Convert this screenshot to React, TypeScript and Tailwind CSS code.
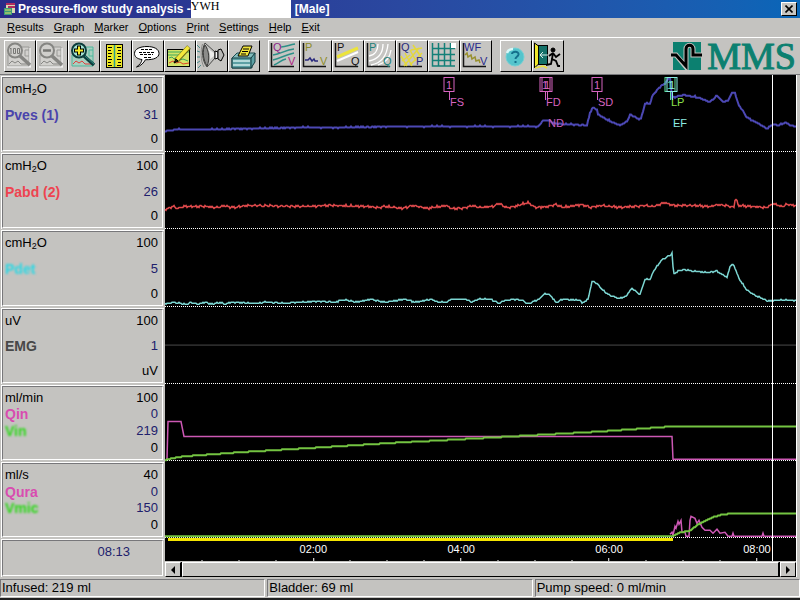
import type { ReactNode } from "react";

type Point = [number, number];

const TRACE_WIDTH = 631;
const ROW_HEIGHT = 77;

// Builds a stepped path with one sample per unit and a little signal noise
const tracePath = (points: Point[], noise = 0) => {
  let path = "";
  let seg = 0;
  for (let x = points[0][0]; x <= points[points.length - 1][0]; x++) {
    while (seg < points.length - 2 && x > points[seg + 1][0]) seg++;
    const [x0, y0] = points[seg];
    const [x1, y1] = points[seg + 1];
    const base = y0 + ((y1 - y0) * (x - x0)) / (x1 - x0);
    const jitter = noise * Math.sin(x * 1.9) * Math.sin(x * 0.73 + 1);
    path += `${path ? "L" : "M"}${x} ${Math.round(base + jitter)}`;
  }
  return path;
};

const toLine = (points: Point[]) => "M" + points.map((p) => p.join(" ")).join("L");

const pves = tracePath(
  [
    [0, 57], [10, 55], [35, 55], [95, 54], [135, 53], [175, 53], [235, 52], [373, 52], [375, 50], [378, 46], [384, 46],
    [390, 49], [422, 51], [425, 38], [428, 33], [432, 35], [433, 40], [444, 46], [455, 51], [462, 47], [465, 40], [473, 44],
    [476, 44], [480, 29], [485, 29], [488, 20], [494, 13], [500, 8], [505, 2], [507, 23], [512, 22], [518, 20], [530, 22],
    [545, 27], [552, 21], [558, 27], [563, 26], [567, 18], [570, 18], [573, 29], [582, 43], [593, 49], [602, 54], [608, 50],
    [613, 51], [620, 48], [626, 51], [631, 52],
  ],
  0.6
);

const pabd = tracePath(
  [
    [0, 58], [3, 57], [8, 55], [13, 57], [19, 55], [40, 55], [52, 56], [60, 54], [66, 56], [84, 54], [140, 55], [166, 54],
    [200, 55], [212, 56], [220, 55], [238, 57], [248, 54], [262, 57], [281, 54], [287, 57], [298, 57], [307, 54], [315, 56],
    [328, 55], [334, 52], [341, 56], [350, 55], [363, 51], [370, 56], [384, 55], [391, 53], [399, 56], [417, 53], [426, 56],
    [436, 54], [455, 56], [480, 54], [488, 55], [500, 51], [509, 54], [528, 54], [546, 55], [553, 53], [566, 55], [569, 56],
    [570, 48], [572, 49], [573, 54], [602, 56], [608, 52], [616, 55], [622, 53], [631, 54],
  ],
  1.2
);

const pdet = tracePath(
  [
    [0, 75], [5, 75], [8, 74], [15, 75], [22, 76], [26, 74], [32, 76], [40, 74], [48, 76], [55, 74], [60, 76], [66, 74], [90, 75],
    [100, 74], [122, 75], [135, 74], [150, 73], [170, 74], [176, 72], [182, 72], [190, 74], [206, 71], [220, 74], [240, 71],
    [250, 74], [265, 71], [275, 74], [282, 74], [286, 71], [301, 71], [307, 74], [313, 71], [326, 71], [334, 75], [340, 72],
    [352, 71], [357, 72], [363, 76], [368, 73], [374, 71], [380, 65], [384, 66], [391, 74], [398, 71], [415, 72], [417, 75],
    [423, 71], [427, 53], [431, 54], [435, 59], [444, 67], [454, 70], [461, 68], [467, 60], [475, 66], [480, 51], [485, 51],
    [489, 42], [497, 31], [506, 26], [507, 24], [508, 38], [509, 45], [514, 42], [519, 41], [530, 43], [545, 44], [551, 42],
    [562, 49], [565, 38], [567, 36], [569, 37], [574, 50], [582, 62], [590, 67], [603, 73], [612, 72], [631, 72],
  ],
  0.6
);

const qin = toLine([[2, 76], [3, 38], [16, 38], [19, 53], [507, 53], [508, 76], [631, 76]]);
const vin = tracePath([[0, 77], [7, 75], [20, 73], [35, 72], [75, 69], [142, 65], [255, 58], [435, 48], [507, 43], [631, 43]]);
const qura = toLine([
  [505, 74], [507, 72], [508, 75], [510, 66], [511, 68], [513, 61], [514, 64], [516, 60], [517, 72], [520, 72], [521, 76], [524, 76],
  [525, 60], [526, 56], [530, 58], [532, 63], [534, 60], [537, 67], [540, 70], [545, 70], [548, 73], [552, 69], [555, 73],
  [560, 72], [563, 76], [567, 76], [568, 73], [569, 76], [597, 76], [598, 73], [599, 76], [631, 76],
]);
const vmic = tracePath([[0, 76], [508, 76], [515, 72], [524, 71], [535, 63], [547, 57], [557, 54], [568, 53], [631, 53]]);

interface Line {
  label?: string;
  labelClass?: string;
  value?: string;
  live?: boolean;
}

interface Channel {
  id: string;
  unit: ReactNode;
  max: string;
  lines: Line[];
  traces: { d: string; color: string; width: number }[];
}

const cmH2O = (
  <>
    cmH<span className="relative top-[2px] text-[9px]">2</span>O
  </>
);

const channels: Channel[] = [
  {
    id: "pves",
    unit: cmH2O,
    max: "100",
    lines: [{ label: "Pves (1)", labelClass: "text-[#4a44ac]", value: "31", live: true }, { value: "0" }],
    traces: [{ d: pves, color: "#4c48b4", width: 2 }],
  },
  {
    id: "pabd",
    unit: cmH2O,
    max: "100",
    lines: [{ label: "Pabd (2)", labelClass: "text-[#ee4450]", value: "26", live: true }, { value: "0" }],
    traces: [{ d: pabd, color: "#e04a4c", width: 1.5 }],
  },
  {
    id: "pdet",
    unit: cmH2O,
    max: "100",
    lines: [{ label: "Pdet", labelClass: "text-[#2cd8e4] blur-[1px]", value: "5", live: true }, { value: "0" }],
    traces: [{ d: pdet, color: "#7cd6d2", width: 1.5 }],
  },
  {
    id: "emg",
    unit: "uV",
    max: "100",
    lines: [{ label: "EMG", labelClass: "text-[#484848]", value: "1", live: true }, { value: "uV" }],
    traces: [{ d: "M0 38.5H631", color: "#4a4a4a", width: 1 }],
  },
  {
    id: "infusion",
    unit: "ml/min",
    max: "100",
    lines: [
      { label: "Qin", labelClass: "text-[#d84cb0]", value: "0", live: true },
      { label: "Vin", labelClass: "text-[#28d814] blur-[1px]", value: "219", live: true },
      { value: "0" },
    ],
    traces: [
      { d: qin, color: "#cc58b4", width: 1.5 },
      { d: vin, color: "#74c442", width: 2 },
    ],
  },
  {
    id: "flow",
    unit: "ml/s",
    max: "40",
    lines: [
      { label: "Qura", labelClass: "text-[#d84cb0]", value: "0", live: true },
      { label: "Vmic", labelClass: "text-[#28d814] blur-[1px]", value: "150", live: true },
      { value: "0" },
    ],
    traces: [
      { d: qura, color: "#cc58b4", width: 1.5 },
      { d: vmic, color: "#74c442", width: 2 },
    ],
  },
];

const menuItems = ["Results", "Graph", "Marker", "Options", "Print", "Settings", "Help", "Exit"];

const markers = [
  { x: 284, label: "FS", low: false, color: "text-[#d664c0]", labelColor: "text-[#d664c0]" },
  { x: 380, label: "FD", low: false, color: "text-[#d664c0]", labelColor: "text-[#d664c0]" },
  { x: 382, label: "ND", low: true, color: "text-[#d664c0]", labelColor: "text-[#c45cb8]" },
  { x: 432, label: "SD", low: false, color: "text-[#d664c0]", labelColor: "text-[#d664c0]" },
  { x: 505, label: "LP", low: false, color: "text-[#5ce0a0]", labelColor: "text-[#8ce04c]" },
  { x: 507, label: "EF", low: true, color: "text-[#8cece4]", labelColor: "text-[#8cece4]" },
];

const percent = (x: number) => `${(x / TRACE_WIDTH) * 100}%`;

const ticks = Array.from({ length: 16 }, (_, i) => ({ x: 37.4 + i * 36.97, major: i % 4 === 3, minutes: (i + 1) / 2 }));

const raised = "bg-[#c6c5c2] border border-t-white border-l-white border-r-black border-b-black";
const sunken = "border border-t-[#77777a] border-l-[#77777a] border-r-white border-b-white";

/* ---------- Toolbar icons ---------- */

const Icon = ({ children }: { children: ReactNode }) => (
  <svg viewBox="0 0 30 30" className="size-[30px]" fill="none" stroke="black" aria-hidden="true">
    {children}
  </svg>
);

const Letter = ({ x, y, color, children }: { x: number; y: number; color: string; children: string }) => (
  <text x={x} y={y} fill={color} stroke="none" fontSize="11" fontFamily="Liberation Sans, Arial, sans-serif">
    {children}
  </text>
);

const Magnifier = ({ sign, active }: { sign: "100" | "-" | "+"; active?: boolean }) => {
  const ink = active ? "#0c3c3c" : "#858582";
  return (
    <Icon>
      <path d="M3 14V25H24V6H17M20 9H24M20 9V15H24" stroke={active ? "#4cb89c" : "#9a9a97"} fill={active ? "#a8cfc0" : "#d2d1ce"} />
      <path d="M4 23L7 20L10 22L13 20L16 23H24" stroke={active ? "#e03c3c" : "#858582"} />
      {!active && <path d="M2 26H26M25 7V26" stroke="white" strokeWidth="1" />}
      <circle cx="10" cy="9.5" r="7" fill={active ? "#a4e4d4" : "#d0cfcc"} stroke={ink} strokeWidth="2" />
      <path d="M15 15L25 24" stroke={ink} strokeWidth="3.5" />
      {active && <path d="M16 15L25 23" stroke="#2c8c84" strokeWidth="1" />}
      {sign === "100" && <path d="M6 7V13M5 8L6 7M8.5 7.5H10.5V12.5H8.5ZM12.5 7.5H14.5V12.5H12.5Z" stroke="#777774" />}
      {sign === "-" && <path d="M6 9.5H14" stroke="#777774" strokeWidth="2.5" />}
      {sign === "+" && (
        <>
          <path d="M10 4.5V14.5M5 9.5H15" stroke="black" strokeWidth="4" />
          <path d="M10 5.5V13.5M6 9.5H14" stroke="#f4ec2c" strokeWidth="2" />
        </>
      )}
    </Icon>
  );
};

const RulerIcon = () => (
  <Icon>
    <rect x="5.5" y="3.5" width="16" height="23" fill="#eee824" />
    <path d="M13.5 4V26" stroke="#28a090" strokeWidth="1.5" />
    <path d="M7 6.500H11M7 9.500H10M7 12.500H11M7 15.500H10M7 18.500H11M7 21.500H10M7 24.500H11M16 6.500H20M17 9.500H20M16 12.500H20M17 15.500H20M16 18.500H20M17 21.500H20M16 24.500H20" />
  </Icon>
);

const SpeechIcon = () => (
  <Icon>
    <path d="M9 18.5C4 18 1.500 15.500 1.500 12.500C1.500 8 7 5.500 14 5.500C21 5.500 26 8 26 12.500C26 16.500 21 19 12.500 18.700C10.500 22 8 25 3.500 26C7 23.500 8.500 21.500 9 18.500Z" fill="white" />
    <path d="M8 8.500H20M6 11.500H22M7 13.500H20M11 16.500H18" strokeDasharray="3 1" />
  </Icon>
);

const EditIcon = () => (
  <Icon>
    <rect x="2.5" y="8.5" width="22" height="17" fill="#d4e468" />
    <path d="M3 11H24M3 14H14" stroke="#3ca85c" />
    <path d="M4 17L7 16L9 18L12 16M15 19L18 18L23 20" stroke="#3ca85c" />
    <path d="M4 22L8 20L11 22L15 21L18 23L24 22" stroke="#e0402c" />
    <path d="M11 20L24 6" stroke="#6c6414" strokeWidth="5" />
    <path d="M12 18.500L23.500 6" stroke="#f4e83c" strokeWidth="3.5" />
    <path d="M9 22L13 20L11 18Z" fill="#302c10" />
  </Icon>
);

const HornIcon = () => (
  <Icon>
    <path d="M0 4L3 7M0 10L3 11M0 16H3M0 22L3 20M1 27L4 24" stroke="#4c8c8c" />
    <path d="M5.500 3C3.500 9 3.500 20 7 26" stroke="#8c8c8a" />
    <path d="M8 2L18 11V17L10 26C5 20 4 9 8 2Z" fill="#c4c4c2" stroke="#484846" />
    <path d="M8 4C12 9 13 19 10 25C6 19 5 9 8 4Z" fill="#8c8c8a" stroke="#383836" />
    <path d="M11 8L17 12V15L13 18C13.500 14 13 11 11 8Z" fill="#ececea" stroke="none" />
    <path d="M18 10L21 11V17L18 18Z" fill="#f4f4f4" />
    <path d="M21 9L24 8L27 14L24 20L21 18Z" fill="#b8b8b6" />
  </Icon>
);

const PrinterIcon = () => (
  <Icon>
    <path d="M3 17L8 12H26L23 18V27H3Z" fill="#84bcbc" stroke="#1c4c50" />
    <path d="M3 17H22L26 12V21L22 27H3Z" fill="#5ca0a4" stroke="#143c40" />
    <path d="M4 20H21M4 24H21" stroke="#d0ecea" strokeWidth="1.5" />
    <path d="M22 17V27" stroke="#143c40" />
    <path d="M9 15L14 5H23L19 15Z" fill="#f0e43c" />
    <path d="M14 8H20M13 10.500H19M12 13H17" />
  </Icon>
);

const Axes = () => <path d="M2.500 2V25.500H25" stroke="#141414" strokeWidth="1.5" />;

const QVIcon = () => (
  <Icon>
    <Axes />
    <path d="M12 6C17 6 20 4 26 3M4 14C12 13 16 9 25 8M4 19C12 17 16 14 25 12M5 24C10 22 12 19 17 18" stroke="#2c9088" strokeWidth="1.5" />
    <Letter x={4} y={10} color="#8c2488">Q</Letter>
    <Letter x={19} y={24} color="#b01c80">V</Letter>
  </Icon>
);

const PVIcon = () => (
  <Icon>
    <Axes />
    <path d="M4 19H7L9 17L11 20L13 18L14 20H17" stroke="#28287c" strokeWidth="1.5" />
    <Letter x={4} y={10} color="#8c8c28">P</Letter>
    <Letter x={19} y={24} color="#8c8c28">V</Letter>
  </Icon>
);

const PQIcon = () => (
  <Icon>
    <Axes />
    <path d="M4 16L25 7" stroke="#ece43c" strokeWidth="3" />
    <path d="M4 20L25 11" stroke="white" strokeWidth="2" />
    <Letter x={4} y={10} color="#141414">P</Letter>
    <Letter x={18} y={24} color="#141414">Q</Letter>
  </Icon>
);

const NomogramIcon = () => (
  <Icon>
    <Axes />
    <path d="M4 15C10 14 13 9 13 3M4 20C14 18 18 11 18 3M6 24C17 22 22 14 23 3M13 24C20 22 25 17 26 9" stroke="white" strokeWidth="1.3" />
    <Letter x={4} y={10} color="#1c8078">P</Letter>
    <Letter x={18} y={24} color="#1c8078">Q</Letter>
  </Icon>
);

const QPIcon = () => (
  <Icon>
    <Axes />
    <path d="M4 15L10 25M8 12L15 25M13 9L19 20M16 4L24 16M5 20L13 14M7 25L22 7M13 24L25 12M14 9L25 7" stroke="#e4d83c" strokeWidth="1.5" />
    <Letter x={4} y={10} color="#28287c">Q</Letter>
    <Letter x={19} y={24} color="#28287c">P</Letter>
  </Icon>
);

const GridIcon = () => (
  <Icon>
    <path d="M3.500 2V25H26M9.500 2V25M15.500 2V25M21.500 2V25M3 7.500H26M3 13.500H26M3 19.500H26" stroke="#148078" strokeWidth="1.5" />
    <rect x="22" y="2" width="5" height="5" fill="white" stroke="none" />
  </Icon>
);

const WFIcon = () => (
  <Icon>
    <Axes />
    <path d="M4 14L6 12L7 16L10 14L11 18L14 16L15 20L18 19L19 22" stroke="#98902c" strokeWidth="1.5" />
    <Letter x={3} y={10} color="#28288c">WF</Letter>
    <Letter x={19} y={24} color="#28288c">V</Letter>
  </Icon>
);

const HelpIcon = () => (
  <Icon>
    <circle cx="14" cy="16" r="9" fill="#54c4cc" stroke="#74d0d4" />
    <path d="M6 12C7 9 10 8 12 8" stroke="#d8f8f8" strokeWidth="2.5" />
    <path d="M11 13C11 10 18 10 17.500 13.500C17 16 14.500 15.500 14.500 18M14.500 20V22" stroke="#14708c" strokeWidth="2" />
  </Icon>
);

const ExitIcon = () => (
  <Icon>
    <path d="M1.500 2V27L5.500 23V5Z" fill="#f0e82c" />
    <rect x="5.500" y="4.500" width="9" height="19" fill="#147068" />
    <path d="M2 27L10 25L14 27" stroke="#ece03c" strokeWidth="1.5" />
    <path d="M7 14H15M7 14L10 11M7 14L10 17" stroke="#d8ece8" />
    <circle cx="20" cy="9" r="2" fill="black" />
    <path d="M20 12L19 18L23 20L25 25H27M19 18L18 23L13 24M20 12L16 15M20 12L23 16L27 13" strokeWidth="1.8" />
  </Icon>
);

const toolGroups = [
  [
    { name: "Zoom 100%", icon: <Magnifier sign="100" /> },
    { name: "Zoom out", icon: <Magnifier sign="-" /> },
    { name: "Zoom in", icon: <Magnifier sign="+" active /> },
    { name: "Scale", icon: <RulerIcon /> },
    { name: "Comment", icon: <SpeechIcon /> },
    { name: "Edit graph", icon: <EditIcon /> },
    { name: "Sound", icon: <HornIcon /> },
    { name: "Print", icon: <PrinterIcon /> },
  ],
  [
    { name: "Flow volume plot", icon: <QVIcon /> },
    { name: "Pressure volume plot", icon: <PVIcon /> },
    { name: "Pressure flow plot", icon: <PQIcon /> },
    { name: "Nomogram", icon: <NomogramIcon /> },
    { name: "Flow pressure plot", icon: <QPIcon /> },
    { name: "Grid", icon: <GridIcon /> },
    { name: "WF plot", icon: <WFIcon /> },
  ],
  [
    { name: "Help", icon: <HelpIcon /> },
    { name: "Exit", icon: <ExitIcon /> },
  ],
];

/* ---------- Page parts ---------- */

const TitleBar = () => (
  <header className="flex h-[18px] items-center bg-gradient-to-r from-[#2a2a88] via-[#2a48a0] to-[#0866b8] pl-[3px] pr-[3px] text-xs font-bold text-white">
    <svg viewBox="0 0 14 14" className="mr-px size-[14px]" aria-hidden="true">
      <path d="M3 1H12V11H3Z" fill="#d8d8b0" />
      <path d="M3 2H12M5 5H12" stroke="#b02c60" strokeWidth="2" />
      <path d="M1 6H9V13H1Z" fill="#3c9c78" />
      <path d="M2 8H8M2 11H8" stroke="#e8e060" />
    </svg>
    <h1 className="whitespace-nowrap">Pressure-flow study analysis -</h1>
    <span className="h-full w-[100px] bg-white font-['Liberation_Serif',serif] text-xs leading-3 font-normal text-black">YWH</span>
    <span className="ml-1">[Male]</span>
    <button aria-label="Close" className={`ml-auto flex h-[14px] w-4 items-center justify-center ${raised}`}>
      <svg viewBox="0 0 8 8" className="size-2" stroke="black" strokeWidth="1.6" aria-hidden="true">
        <path d="M0.500 0.500L7.500 7.500M7.500 0.500L0.500 7.500" />
      </svg>
    </button>
  </header>
);

const MenuBar = () => (
  <nav className="flex h-5 items-center border-b border-white px-[2px] text-[11px]">
    {menuItems.map((item) => (
      <button key={item} className="px-[5px]">
        <span className="underline">{item[0]}</span>
        {item.slice(1)}
      </button>
    ))}
  </nav>
);

const Logo = () => (
  <div className="ml-auto flex items-center gap-1 pr-1">
    <svg viewBox="0 0 32 30" className="h-[30px] w-8" aria-hidden="true">
      <rect x="2" y="1" width="28" height="28" fill="#0c8070" />
      <path d="M0 14H5L15 26V8C15 3 22 3 22 8V14H31" fill="none" stroke="#c6c5c2" strokeWidth="5" />
      <path d="M0 14H5L15 25V8C15 3 22 3 22 8V14H31" fill="none" stroke="black" strokeWidth="3" />
    </svg>
    <span className="font-['Liberation_Serif',serif] text-[38px] leading-8 text-[#0c8070] [-webkit-text-stroke:1px_#0c8070]">MMS</span>
  </div>
);

const Toolbar = () => (
  <div className="flex h-9 items-center gap-2 pl-1">
    {toolGroups.map((group, i) => (
      <div key={i} className="flex">
        {group.map((tool) => (
          <button key={tool.name} aria-label={tool.name} className={`size-8 ${raised}`}>
            {tool.icon}
          </button>
        ))}
      </div>
    ))}
    <Logo />
  </div>
);

const Panel = ({ children }: { children: ReactNode }) => (
  <div className="h-full border-t border-l border-white pr-px pb-px">
    <div className={`flex h-full flex-col justify-between pt-[3px] pr-1 pb-[3px] pl-[2px] ${sunken}`}>{children}</div>
  </div>
);

const ChannelPanel = ({ channel }: { channel: Channel }) => (
  <div className="flex-1 pt-px pl-px">
    <Panel>
      <div className="flex justify-between leading-4">
        <span>{channel.unit}</span>
        <span>{channel.max}</span>
      </div>
      {channel.lines.map((line, i) => (
        <div key={i} className="flex justify-between leading-4">
          <span className={`text-sm leading-4 font-bold ${line.labelClass ?? ""}`}>{line.label}</span>
          <span className={line.live ? "text-[#20206c]" : ""}>{line.value}</span>
        </div>
      ))}
    </Panel>
  </div>
);

const ChannelTrace = ({ channel }: { channel: Channel }) => (
  <div className="relative flex-1 border-b border-dotted border-white">
    <svg
      viewBox={`0 0 ${TRACE_WIDTH} ${ROW_HEIGHT}`}
      preserveAspectRatio="none"
      className="absolute inset-0 size-full overflow-visible"
      fill="none"
      aria-hidden="true"
    >
      {channel.traces.map((trace) => (
        <path key={trace.color} d={trace.d} stroke={trace.color} strokeWidth={trace.width} vectorEffect="non-scaling-stroke" />
      ))}
    </svg>
  </div>
);

const Markers = () => (
  <>
    {markers.map((marker) => (
      <div key={marker.label} className={`absolute top-[2px] text-[11px] ${marker.color}`} style={{ left: percent(marker.x) }}>
        <div className="h-[15px] w-[11px] -translate-x-1/2 border border-current text-center leading-[14px]">1</div>
        <div className="h-2 w-px bg-current" />
        <div className={`absolute left-px leading-3 ${marker.low ? "top-10" : "top-[19px]"} ${marker.labelColor}`}>{marker.label}</div>
      </div>
    ))}
  </>
);

const TimeAxis = () => (
  <div className="relative h-[23px] text-[11px] text-white">
    <div className="absolute top-0 h-[3px] bg-[#f4e400]" style={{ left: percent(3), width: percent(505) }} />
    {ticks.map((tick) => (
      <div key={tick.x} className="absolute bottom-0 flex -translate-x-1/2 flex-col items-center" style={{ left: percent(tick.x) }}>
        {tick.major && <span className="mb-[3px] leading-3">{`0${tick.minutes}:00`}</span>}
        <span className={`w-px bg-white ${tick.major ? "h-[3px]" : "h-px"}`} />
      </div>
    ))}
  </div>
);

const ScrollBar = () => (
  <div className="flex h-4 gap-px border-t border-[#c6c5c2] bg-black">
    <button aria-label="Scroll left" className={`flex w-4 items-center justify-center ${raised}`}>
      <svg viewBox="0 0 4 8" className="h-2 w-1" aria-hidden="true">
        <path d="M4 0V8L0 4Z" />
      </svg>
    </button>
    <div className={`flex-1 ${raised}`} />
    <button aria-label="Scroll right" className={`flex w-4 items-center justify-center ${raised}`}>
      <svg viewBox="0 0 4 8" className="h-2 w-1" aria-hidden="true">
        <path d="M0 0V8L4 4Z" />
      </svg>
    </button>
  </div>
);

const StatusBar = () => (
  <footer className="flex h-[23px] gap-[2px] border-b-2 border-[#202020] pt-[2px] pb-px leading-4">
    {["Infused: 219 ml", "Bladder: 69 ml", "Pump speed: 0 ml/min"].map((text) => (
      <div key={text} className={`flex-1 pl-px ${sunken}`}>
        {text}
      </div>
    ))}
  </footer>
);

export default function App() {
  return (
    <div className="flex min-h-screen flex-col bg-[#c4c3c0] font-['Liberation_Sans',Arial,sans-serif] text-[13px] text-black">
      <TitleBar />
      <MenuBar />
      <Toolbar />

      <main className="flex flex-1 border-t border-[#77777a]">
        {/* Channel values */}
        <aside className="flex w-[165px] flex-col pr-px">
          {channels.map((channel) => (
            <ChannelPanel key={channel.id} channel={channel} />
          ))}
          <div className="h-[39px] pt-px pl-px">
            <Panel>
              <time className="pr-7 text-right leading-4 text-[#20206c]">08:13</time>
            </Panel>
          </div>
        </aside>

        {/* Recorded curves */}
        <section className="mr-[3px] flex flex-1 flex-col border-r border-white bg-black">
          <div className="relative flex flex-1 flex-col">
            {channels.map((channel) => (
              <ChannelTrace key={channel.id} channel={channel} />
            ))}
            <TimeAxis />
            <Markers />
            <div className="absolute inset-y-0 w-px bg-white" style={{ left: percent(607) }} />
          </div>
          <ScrollBar />
        </section>
      </main>

      <StatusBar />
    </div>
  );
}
